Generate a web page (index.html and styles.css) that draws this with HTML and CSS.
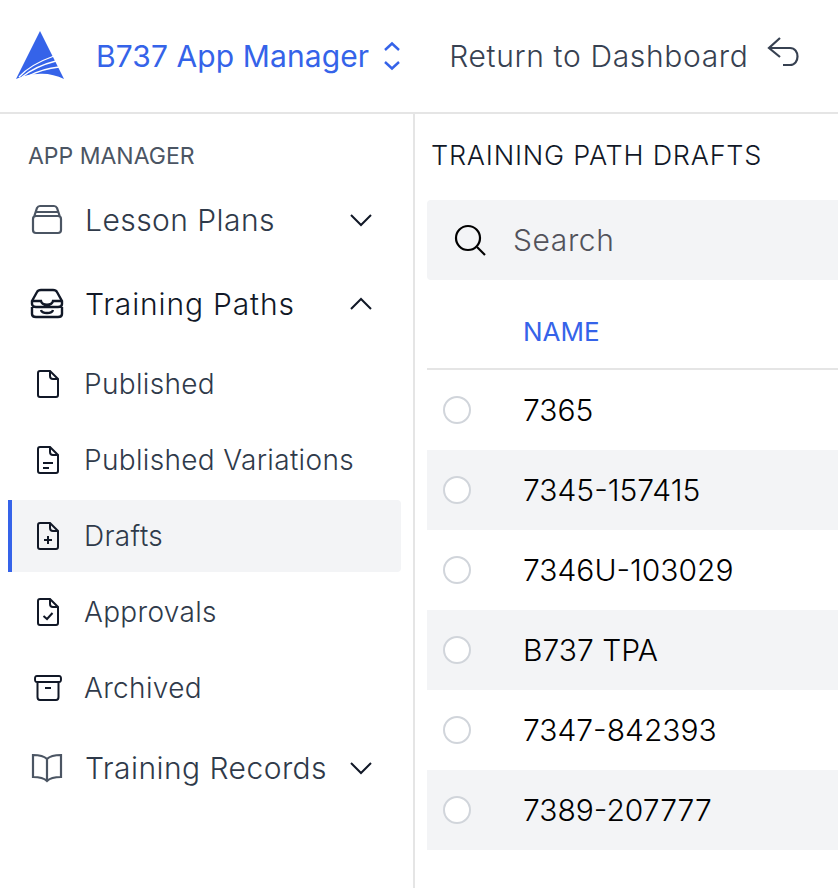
FILE: index.html
```html
<!DOCTYPE html>
<html lang="en">
<head>
    <meta charset="UTF-8">
    <title>B737 App Manager</title>
    <link rel="stylesheet" href="styles.css">
</head>
<body>
    <header class="topbar">
        <svg class="logo" viewBox="0 0 48 48" width="48" height="48">
            <path d="M24 0 L48 48 C40 44 30 42 22 43 C14 43 6 45 0 48 Z" fill="#3563e9"/>
            <path d="M3 46 C12 36 24 30 38 25 M6 46 C16 38 28 33 40 30 M10 46 C20 41 32 37 43 36" fill="none" stroke="#fff" stroke-width="1.3"/>
        </svg>
        <div class="app-name">B737 App Manager</div>
        <svg class="updown" viewBox="0 0 20 32" width="20" height="32">
            <path d="M3 10 L10 3.500 L17 10 M3 22 L10 28.500 L17 22" fill="none" stroke="#3563e9" stroke-width="2.400"/>
        </svg>
        <div class="return-link">Return to Dashboard</div>
        <svg class="return-icon" viewBox="0 0 32 32" width="32" height="32">
            <path d="M13 1 L2 11 L13 20 M2 11 H23 C33 11 33 28 23 28 H16" fill="none" stroke="#374151" stroke-width="2.200"/>
        </svg>
    </header>

    <div class="main">
        <nav class="sidebar">
            <div class="side-title">APP MANAGER</div>

            <div class="nav-group">
                <svg class="group-icon" viewBox="0 0 34 32" width="34" height="32">
                    <path d="M3 15 C3 13 4 12 6 12 H28 C30 12 31 13 31 15 V26 C31 28 30 29 28 29 H6 C4 29 3 28 3 26 Z M4 13 L7 4 C7.500 3 8 2 10 2 H24 C26 2 26.500 3 27 4 L30 13 M6 8 H28" fill="none" stroke="#4b5563" stroke-width="2.200"/>
                </svg>
                <span class="group-label">Lesson Plans</span>
                <svg class="chev" viewBox="0 0 24 14" width="24" height="14"><path d="M2 2 L12 12 L22 2" fill="none" stroke="#111827" stroke-width="2"/></svg>
            </div>

            <div class="nav-group dark">
                <svg class="group-icon" viewBox="0 0 34 32" width="34" height="32">
                    <path d="M2 13 L7 4 C8 2 9 2 11 2 H23 C25 2 26 2 27 4 L32 13 V16 C32 18 30 19 28 19 H6 C4 19 2 18 2 16 Z M2 13 H11 C12 18 22 18 23 13 H32 M2 19 V26 C2 28 4 29 6 29 H28 C30 29 32 28 32 26 V19 M11 22 C12 26 22 26 23 22" fill="none" stroke="#111827" stroke-width="2.400"/>
                </svg>
                <span class="group-label">Training Paths</span>
                <svg class="chev" viewBox="0 0 24 14" width="24" height="14"><path d="M2 12 L12 2 L22 12" fill="none" stroke="#111827" stroke-width="2"/></svg>
            </div>

            <div class="nav-item">
                <svg class="item-icon" viewBox="0 0 24 28" width="24" height="28">
                    <path d="M4 1 H14 L22 9 V25 C22 26 21 27 20 27 H4 C3 27 2 26 2 25 V3 C2 2 3 1 4 1 Z M14 1 V6 C14 8 15 9 17 9 H22" fill="none" stroke="#111827" stroke-width="2"/>
                </svg>
                <span>Published</span>
            </div>
            <div class="nav-item">
                <svg class="item-icon" viewBox="0 0 24 28" width="24" height="28">
                    <path d="M4 1 H14 L22 9 V25 C22 26 21 27 20 27 H4 C3 27 2 26 2 25 V3 C2 2 3 1 4 1 Z M14 1 V6 C14 8 15 9 17 9 H22 M7 17 H17 M7 22 H13" fill="none" stroke="#111827" stroke-width="2"/>
                </svg>
                <span>Published Variations</span>
            </div>
            <div class="nav-item active">
                <svg class="item-icon" viewBox="0 0 24 28" width="24" height="28">
                    <path d="M4 1 H14 L22 9 V25 C22 26 21 27 20 27 H4 C3 27 2 26 2 25 V3 C2 2 3 1 4 1 Z M14 1 V6 C14 8 15 9 17 9 H22 M12 14 V22 M8 18 H16" fill="none" stroke="#111827" stroke-width="2"/>
                </svg>
                <span>Drafts</span>
            </div>
            <div class="nav-item">
                <svg class="item-icon" viewBox="0 0 24 28" width="24" height="28">
                    <path d="M4 1 H14 L22 9 V25 C22 26 21 27 20 27 H4 C3 27 2 26 2 25 V3 C2 2 3 1 4 1 Z M14 1 V6 C14 8 15 9 17 9 H22 M7.500 18 L11 21 L16.500 15" fill="none" stroke="#111827" stroke-width="2"/>
                </svg>
                <span>Approvals</span>
            </div>
            <div class="nav-item">
                <svg class="item-icon wide" viewBox="0 0 28 26" width="28" height="26">
                    <path d="M3 1 H25 C27 1 27 2 27 4 C27 6 27 7 25 7 H3 C1 7 1 6 1 4 C1 2 1 1 3 1 Z M3.500 7 V22 C3.500 24 4.500 25 6 25 H22 C23.500 25 24.500 24 24.500 22 V7 M11 13 H17" fill="none" stroke="#111827" stroke-width="2"/>
                </svg>
                <span>Archived</span>
            </div>

            <div class="nav-group last">
                <svg class="group-icon" viewBox="0 0 34 30" width="34" height="30">
                    <path d="M17 6 C14 3 10 2 3 2 V24 C10 24 14 25 17 28 C20 25 24 24 31 24 V2 C24 2 20 3 17 6 Z M17 6 V28" fill="none" stroke="#4b5563" stroke-width="2.200"/>
                </svg>
                <span class="group-label">Training Records</span>
                <svg class="chev" viewBox="0 0 24 14" width="24" height="14"><path d="M2 2 L12 12 L22 2" fill="none" stroke="#111827" stroke-width="2"/></svg>
            </div>
        </nav>

        <section class="content">
            <h2 class="content-title">TRAINING PATH DRAFTS</h2>
            <div class="search">
                <svg class="search-icon" viewBox="0 0 32 32" width="32" height="32">
                    <circle cx="14" cy="14" r="12" fill="none" stroke="#000" stroke-width="2.200"/>
                    <path d="M23 23 L31 31" stroke="#000" stroke-width="2.200"/>
                </svg>
                <span>Search</span>
            </div>
            <div class="table-head">NAME</div>
            <div class="row"><span class="radio"></span><span>7365</span></div>
            <div class="row"><span class="radio"></span><span>7345-157415</span></div>
            <div class="row"><span class="radio"></span><span>7346U-103029</span></div>
            <div class="row"><span class="radio"></span><span>B737 TPA</span></div>
            <div class="row"><span class="radio"></span><span>7347-842393</span></div>
            <div class="row"><span class="radio"></span><span>7389-207777</span></div>
        </section>
    </div>
</body>
</html>
```

FILE: styles.css
```css
body {
    margin: 0;
    background-color: #fff;
    font-family: Inter, "Liberation Sans", sans-serif;
    font-weight: 300;
    font-size: 30px;
    color: #111827;
    overflow: hidden;
}

.topbar {
    display: flex;
    align-items: center;
    height: 112px;
    border-bottom: 2px solid #e5e5e5;
    padding-left: 16px;
}
.logo {
    margin-right: 32px;
    margin-top: -2px;
}
.app-name {
    color: #3563e9;
    font-weight: 400;
    letter-spacing: 0.1px;
}
.updown {
    margin-left: 13px;
}
.return-link {
    color: #374151;
    margin-left: 47px;
    letter-spacing: 0.65px;
}
.return-icon {
    margin-left: 18px;
    margin-top: -6px;
}

.main {
    display: flex;
    height: 774px;
}

.sidebar {
    box-sizing: border-box;
    width: 415px;
    flex-shrink: 0;
    border-right: 2px solid #e5e5e5;
    padding: 28px 12px 0 8px;
}
.side-title {
    font-size: 23px;
    font-weight: 400;
    color: #4b5563;
    line-height: 28px;
    margin-left: 20px;
    margin-bottom: 8px;
}

.nav-group {
    display: flex;
    align-items: center;
    height: 84px;
    padding-left: 22px;
    color: #2f3a4a;
    letter-spacing: 0.45px;
}
.nav-group.dark {
    color: #111827;
    letter-spacing: 0.85px;
}
.nav-group.last {
    margin-top: 2px;
}
.group-icon {
    width: 34px;
    margin-right: 21px;
}
.group-label {
    flex: 1;
}
.chev {
    margin-right: 28px;
}

.nav-item {
    display: flex;
    align-items: center;
    height: 72px;
    margin-top: 4px;
    padding-left: 28px;
    font-size: 28px;
    letter-spacing: 0.33px;
    color: #2f3a4a;
}
.nav-group + .nav-item {
    margin-top: 2px;
}
.nav-item .item-icon {
    width: 24px;
    margin-right: 24px;
}
.nav-item .item-icon.wide {
    width: 28px;
    margin-left: -2px;
    margin-right: 22px;
}
.nav-item.active {
    background-color: #f3f4f6;
    border-left: 4px solid #3563e9;
    padding-left: 24px;
    border-radius: 0 4px 4px 0;
}

.content {
    flex: 1;
    padding-left: 12px;
    min-width: 0;
}
.content-title {
    margin: 28px 0 0 4px;
    font-size: 27px;
    font-weight: 300;
    letter-spacing: 0.77px;
    line-height: 28px;
    color: #111827;
}
.search {
    display: flex;
    align-items: center;
    height: 80px;
    margin-top: 30px;
    background-color: #f3f4f6;
    border-radius: 4px 0 0 4px;
    padding-left: 27px;
    letter-spacing: 0.6px;
    color: #52525b;
}
.search-icon {
    margin-right: 27px;
}
.table-head {
    height: 90px;
    box-sizing: border-box;
    border-bottom: 2px solid #e5e5e5;
    padding: 35px 0 0 96px;
    line-height: 34px;
    font-size: 26px;
    font-weight: 400;
    color: #3563e9;
}

.row {
    display: flex;
    align-items: center;
    height: 80px;
    padding-left: 16px;
    color: #000;
}
.row:nth-child(odd) {
    background-color: #f3f4f6;
}
.radio {
    box-sizing: border-box;
    width: 28px;
    height: 28px;
    border: 2px solid #d1d5db;
    border-radius: 50%;
    background-color: #fff;
    margin-right: 52px;
}
```
